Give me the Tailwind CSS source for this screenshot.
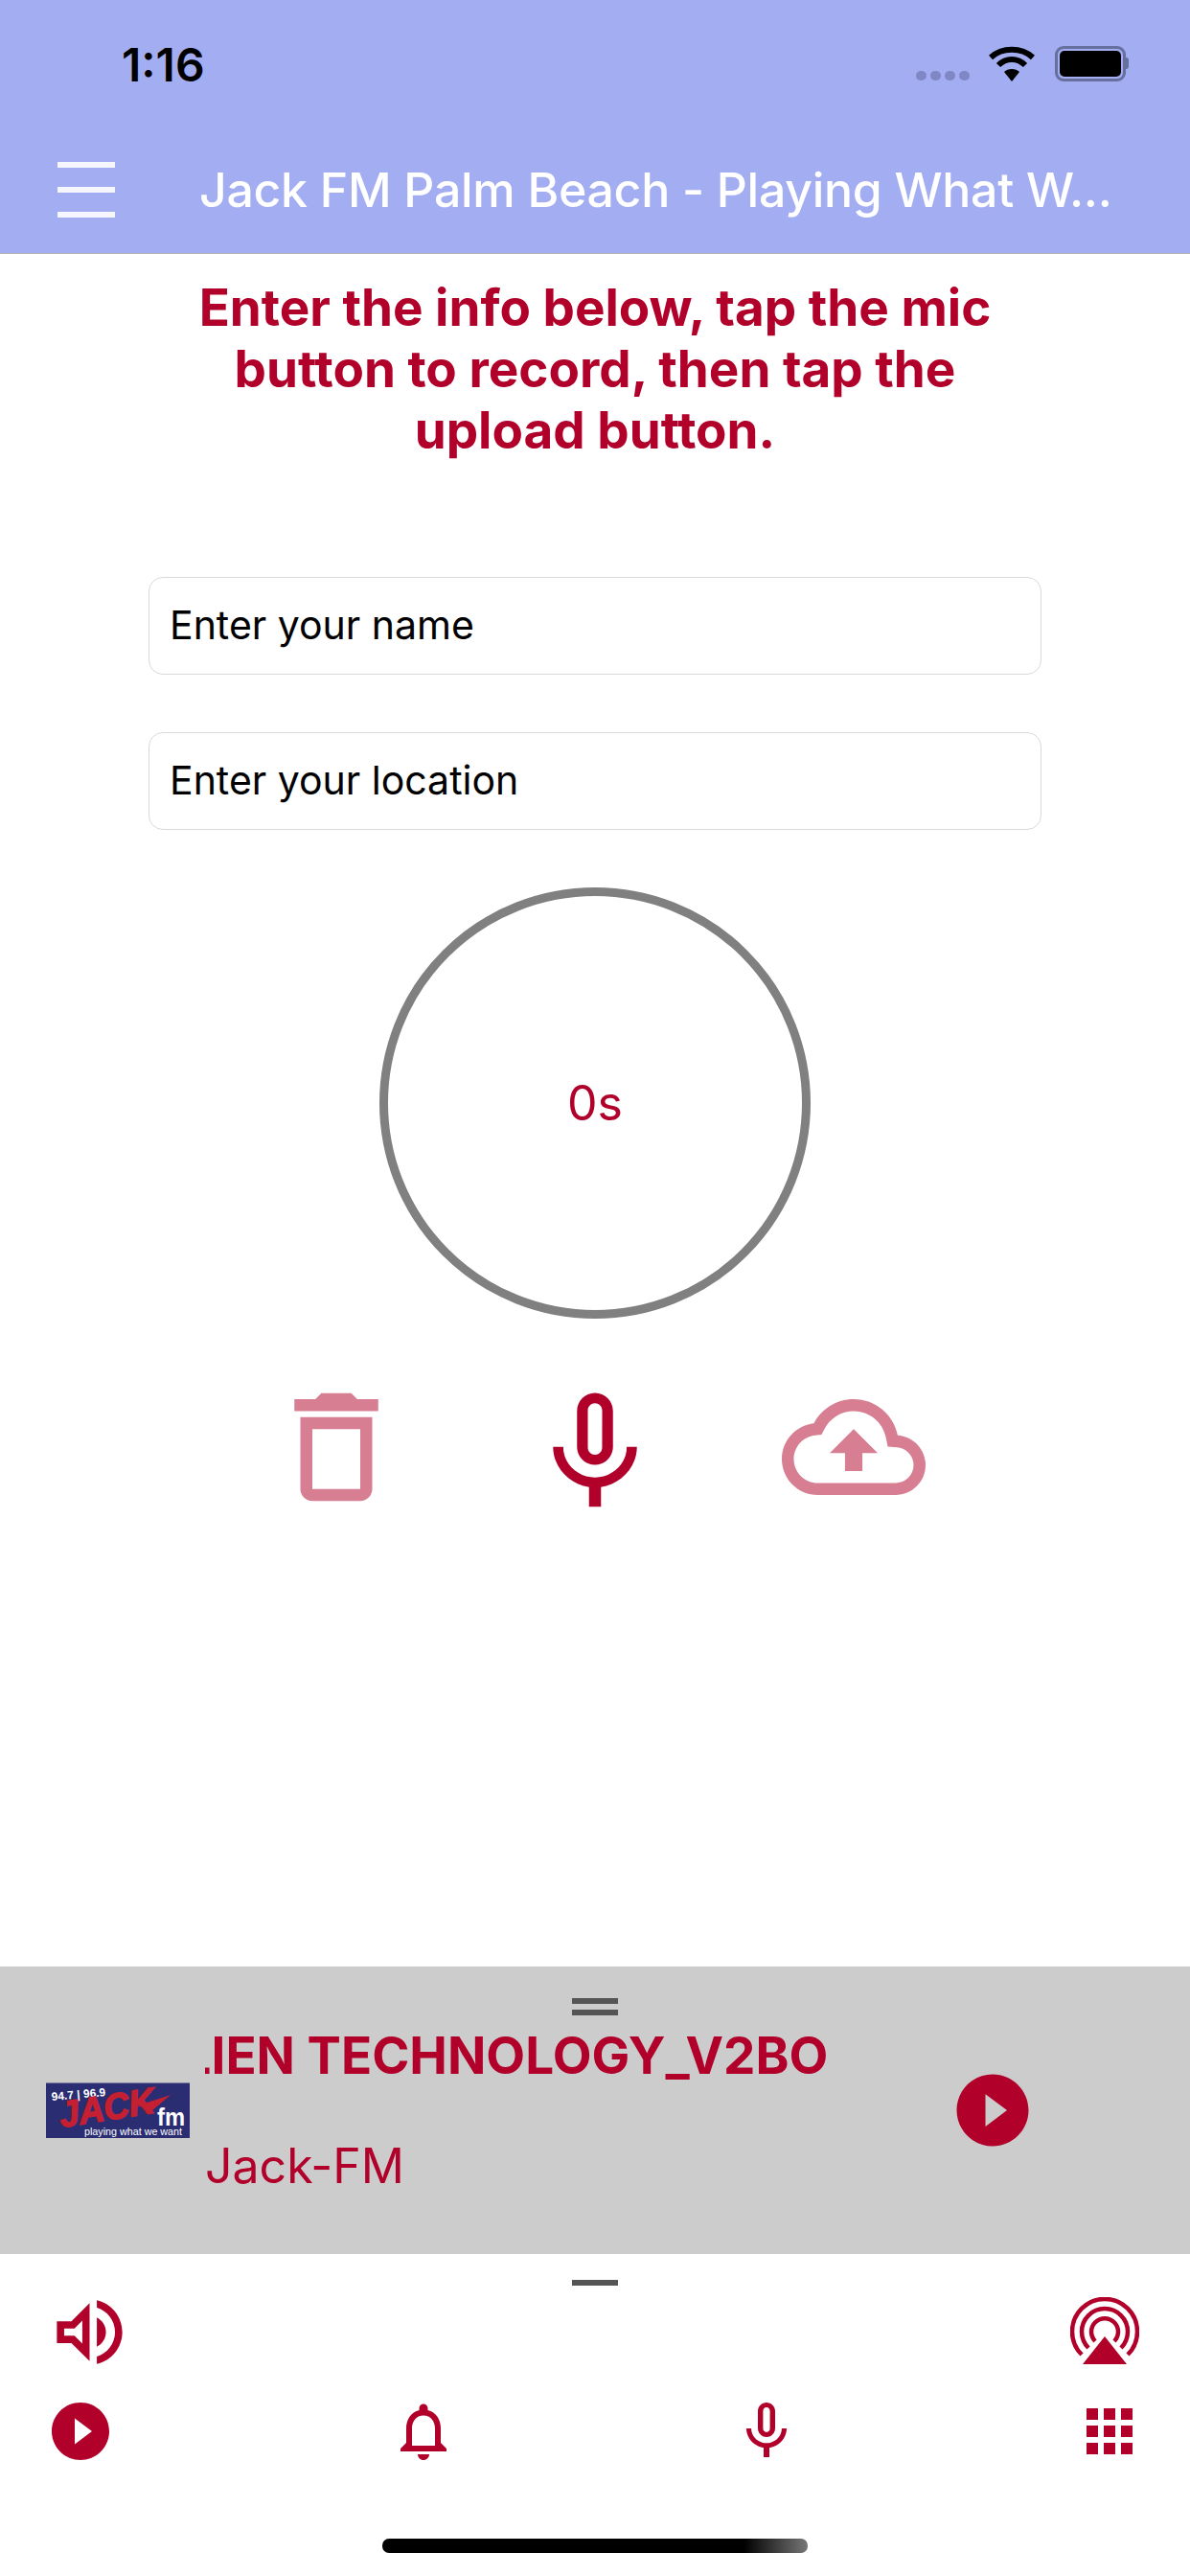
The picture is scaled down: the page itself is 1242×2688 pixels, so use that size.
<!DOCTYPE html>
<html lang="en">
<head>
    <meta charset="UTF-8"/>
    <meta name="viewport" content="width=device-width, initial-scale=1.0"/>
    <title>Jack FM Record</title>
    <script src="https://cdn.jsdelivr.net/npm/@tailwindcss/browser@4"></script>
</head>
<body class="bg-white font-[Inter,sans-serif]">
<div class="relative w-[1242px] h-[2688px] flex flex-col overflow-hidden">

    <!-- Header -->
    <header class="bg-[#a3adf1] h-[265px] border-b border-[#b2b2b2] shrink-0">
        <div class="h-[132px] flex items-center pl-[127px] pr-[64px]">
            <span class="mt-[3px] text-[48px] font-semibold text-black leading-none">1:16</span>
            <div class="ml-auto flex items-end gap-[4px] h-[37px]">
                <div class="flex gap-[4px] mb-[1px] mr-[16px]">
                    <span class="w-[11px] h-[10px] rounded-full bg-[#7f87c4]"></span>
                    <span class="w-[11px] h-[10px] rounded-full bg-[#7f87c4]"></span>
                    <span class="w-[11px] h-[10px] rounded-full bg-[#7f87c4]"></span>
                    <span class="w-[11px] h-[10px] rounded-full bg-[#7f87c4]"></span>
                </div>
                <svg class="w-[48px] h-[37px] mr-[17px]" viewBox="0 0 48 37" fill="none">
                    <path d="M2 12C14 1 34 1 46 12" stroke="black" stroke-width="6"/>
                    <path d="M10 20C18 12 30 12 38 20" stroke="black" stroke-width="6"/>
                    <path d="M16 27C20 23 28 23 32 27L24 37Z" fill="black"/>
                </svg>
                <div class="flex items-center">
                    <div class="w-[74px] h-[37px] rounded-[9px] border-[3px] border-[#666f9e] p-[2px]">
                        <div class="w-full h-full bg-black rounded-[5px]"></div>
                    </div>
                    <span class="w-[3px] h-[12px] bg-[#666f9e] rounded-r-full"></span>
                </div>
            </div>
        </div>
        <div class="h-[132px] flex items-center">
            <div class="ml-[60px] w-[60px] flex flex-col gap-[20px]">
                <span class="h-[6px] bg-white/90"></span>
                <span class="h-[6px] bg-white/90"></span>
                <span class="h-[6px] bg-white/90"></span>
            </div>
            <h1 class="ml-[88px] text-[50px] font-medium text-white whitespace-nowrap tracking-[-0.3px]">Jack FM Palm Beach - Playing What W...</h1>
        </div>
    </header>

    <!-- Main -->
    <main class="flex-1 flex flex-col items-center">
        <h2 class="mt-[24px] w-[900px] text-center text-[53px] leading-[64px] font-bold text-[#b1002a]">Enter the info below, tap the mic button to record, then tap the upload button.</h2>

        <div class="mt-[121px] w-[932px] h-[102px] border border-[#d9d9d9] rounded-[15px] flex items-center pl-[21px] text-[41px] text-black">Enter your name</div>
        <div class="mt-[60px] w-[932px] h-[102px] border border-[#d9d9d9] rounded-[15px] flex items-center pl-[21px] text-[41px] text-black">Enter your location</div>

        <div class="mt-[60px] w-[450px] h-[450px] rounded-full border-[9px] border-[#808080] flex items-center justify-center text-[50px] text-[#b1002a]">0s</div>

        <div class="mt-[59px] w-[810px] grid grid-cols-3 justify-items-center items-start text-[#b1002a]">
            <svg class="w-[150px] h-[150px] opacity-50" viewBox="0 0 24 24" fill="currentColor"><path d="M6 19c0 1.1.9 2 2 2h8c1.1 0 2-.9 2-2V7H6v12zM8 9h8v10H8V9zm7.5-5l-1-1h-5l-1 1H5v2h14V4z"/></svg>
            <svg class="w-[150px] h-[150px] mt-[6px]" viewBox="0 0 24 24" fill="currentColor"><path d="M12 14c1.66 0 3-1.34 3-3V5c0-1.66-1.34-3-3-3S9 3.34 9 5v6c0 1.66 1.34 3 3 3zm-1.2-9.1c0-.66.54-1.2 1.2-1.2.66 0 1.2.54 1.2 1.2l-.01 6.2c0 .66-.53 1.2-1.19 1.2-.66 0-1.2-.54-1.2-1.2V4.9zm6.5 6.1c0 3-2.54 5.1-5.3 5.1S6.7 14 6.7 11H5c0 3.41 2.72 6.23 6 6.72V21h2v-3.28c3.28-.48 6-3.3 6-6.72h-1.7z"/></svg>
            <svg class="w-[150px] h-[150px] opacity-50" viewBox="0 0 24 24" fill="currentColor"><path d="M19.35 10.04C18.67 6.59 15.64 4 12 4 9.11 4 6.6 5.64 5.35 8.04 2.34 8.36 0 10.91 0 14c0 3.31 2.69 6 6 6h13c2.76 0 5-2.24 5-5 0-2.64-2.05-4.78-4.65-4.96zM19 18H6c-2.21 0-4-1.79-4-4 0-2.05 1.53-3.76 3.56-3.97l1.07-.11.5-.95C8.08 7.14 9.94 6 12 6c2.62 0 4.88 1.86 5.39 4.43l.3 1.5 1.53.11c1.56.1 2.78 1.41 2.78 2.96 0 1.65-1.35 3-3 3zM8 13h2.55v3h2.9v-3H16l-4-4z"/></svg>
        </div>
    </main>

    <!-- Mini player -->
    <section class="relative h-[300px] bg-[#cccccc] shrink-0 flex items-center text-[#b1002a]">
        <div class="absolute left-[597px] top-[33px] w-[48px] flex flex-col gap-[6px]">
            <span class="h-[6px] bg-[#555555]"></span>
            <span class="h-[6px] bg-[#555555]"></span>
        </div>
        <svg class="ml-[48px] w-[150px] h-[58px] shrink-0" viewBox="0 0 150 58">
            <rect width="150" height="58" fill="#2b2d72"/>
            <rect width="150" height="1" fill="#7f80a0"/>
            <text x="6" y="19" font-family="Liberation Sans" font-size="12" font-weight="700" fill="white" transform="rotate(-5 6 19)">94.7 | 96.9</text>
            <path d="M96 24L130 13L110 30Z" fill="#c42032"/>
            <text x="16" y="47" font-family="Liberation Sans" font-size="38" font-weight="700" font-style="italic" fill="#c42032" stroke="#c42032" stroke-width="1.5" textLength="100" lengthAdjust="spacingAndGlyphs" transform="rotate(-9 16 47)">JACK</text>
            <text x="116" y="45" font-family="Liberation Sans" font-size="25" font-weight="700" fill="white" textLength="29" lengthAdjust="spacingAndGlyphs">fm</text>
            <text x="40" y="55" font-family="Liberation Sans" font-size="10" fill="white" textLength="102" lengthAdjust="spacingAndGlyphs">playing what we want</text>
        </svg>
        <div class="ml-[16px] w-[740px] flex flex-col gap-[55px] overflow-hidden">
            <div class="whitespace-nowrap text-[53px] leading-[60px] font-bold ml-[-63px]">ALIEN TECHNOLOGY_V2BO</div>
            <div class="text-[50px] leading-[60px]">Jack-FM</div>
        </div>
        <svg class="ml-[37px] w-[90px] h-[90px] shrink-0" viewBox="0 0 24 24" fill="currentColor"><path d="M12 2C6.48 2 2 6.48 2 12s4.48 10 10 10 10-4.48 10-10S17.52 2 12 2zm-2 14.5v-9l6 4.5-6 4.5z"/></svg>
    </section>

    <!-- Bottom controls -->
    <section class="relative h-[336px] shrink-0 text-[#b1002a]">
        <div class="mx-auto mt-[27px] w-[48px] h-[6px] bg-[#555555]"></div>
        <div class="mt-[3px] flex items-start justify-between pl-[48px] pr-[53px]">
            <svg class="w-[91px] h-[91px]" viewBox="0 0 24 24" fill="currentColor"><path d="M3 9v6h4l5 5V4L7 9H3zm7-.17v6.34L7.83 13H5v-2h2.83L10 8.83zM16.5 12c0-1.77-1.02-3.29-2.5-4.03v8.05c1.48-.73 2.5-2.25 2.5-4.02zM14 3.23v2.06c2.89.86 5 3.54 5 6.71s-2.11 5.85-5 6.71v2.06c4.01-.91 7-4.49 7-8.77 0-4.28-2.99-7.86-7-8.77z"/></svg>
            <svg class="w-[72px] h-[72px] mt-[9px]" viewBox="0 0 72 72" fill="none" stroke="currentColor" stroke-width="4.5">
                <path d="M12 60A34 34 0 1 1 60 60"/>
                <path d="M19 53A24 24 0 1 1 53 53"/>
                <path d="M26 46A14 14 0 1 1 46 46"/>
                <path d="M36 41L59 70H13Z" fill="currentColor" stroke="none"/>
            </svg>
        </div>
        <div class="mt-[22px] grid grid-cols-[358px_358px_358px_72px] pl-[48px]">
            <svg class="w-[72px] h-[72px]" viewBox="0 0 24 24" fill="currentColor"><path d="M12 2C6.48 2 2 6.48 2 12s4.48 10 10 10 10-4.48 10-10S17.52 2 12 2zm-2 14.5v-9l6 4.5-6 4.5z"/></svg>
            <svg class="w-[72px] h-[72px]" viewBox="0 0 24 24" fill="currentColor"><path d="M12 22c1.1 0 2-.9 2-2h-4c0 1.1.9 2 2 2zm6-6v-5c0-3.07-1.63-5.64-4.5-6.32V4c0-.83-.67-1.5-1.5-1.5s-1.5.67-1.5 1.5v.68C7.64 5.36 6 7.92 6 11v5l-2 2v1h16v-1l-2-2zm-2 1H8v-6c0-2.48 1.51-4.5 4-4.5s4 2.02 4 4.5v6z"/></svg>
            <svg class="w-[72px] h-[72px]" viewBox="0 0 24 24" fill="currentColor"><path d="M12 14c1.66 0 3-1.34 3-3V5c0-1.66-1.34-3-3-3S9 3.34 9 5v6c0 1.66 1.34 3 3 3zm-1.2-9.1c0-.66.54-1.2 1.2-1.2.66 0 1.2.54 1.2 1.2l-.01 6.2c0 .66-.53 1.2-1.19 1.2-.66 0-1.2-.54-1.2-1.2V4.9zm6.5 6.1c0 3-2.54 5.1-5.3 5.1S6.7 14 6.7 11H5c0 3.41 2.72 6.23 6 6.72V21h2v-3.28c3.28-.48 6-3.3 6-6.72h-1.7z"/></svg>
            <svg class="w-[72px] h-[72px]" viewBox="0 0 24 24" fill="currentColor"><path d="M4 8h4V4H4v4zm6 12h4v-4h-4v4zm-6 0h4v-4H4v4zm0-6h4v-4H4v4zm6 0h4v-4h-4v4zm6-10v4h4V4h-4zm-6 4h4V4h-4v4zm6 6h4v-4h-4v4zm0 6h4v-4h-4v4z"/></svg>
        </div>
        <div class="mx-auto mt-[76px] w-[444px] h-[15px] rounded-[7px] bg-[linear-gradient(90deg,#000_85%,#777_100%)]"></div>
    </section>
</div>
</body>
</html>
